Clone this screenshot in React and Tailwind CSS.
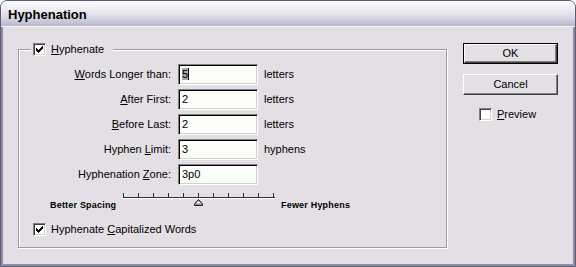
const fields = [
  { label: 'Words Longer than:', key: 'W', rest: 'ords Longer than:', value: '5', unit: 'letters', selected: true },
  { label: 'After First:', key: 'A', rest: 'fter First:', value: '2', unit: 'letters' },
  { label: 'Before Last:', key: 'B', rest: 'efore Last:', value: '2', unit: 'letters' },
  { label: 'Hyphen Limit:', pre: 'Hyphen ', key: 'L', rest: 'imit:', value: '3', unit: 'hyphens' },
  { label: 'Hyphenation Zone:', pre: 'Hyphenation ', key: 'Z', rest: 'one:', value: '3p0', unit: '' },
];

function Checkbox({ checked }) {
  return (
    <span className="flex h-[13px] w-[13px] shrink-0 items-center justify-center border border-t-[#808080] border-l-[#808080] border-r-white border-b-white bg-white shadow-[inset_1px_1px_0_#404040,inset_-1px_-1px_0_#d4d0c8]">
      {checked && (
        <svg width="7" height="7" viewBox="0 0 7 7" shapeRendering="crispEdges">
          <path d="M6 0h1v1h-1zM5 1h2v1h-2zM0 2h1v1h-1zM4 2h3v1h-3zM0 3h2v1h-2zM3 3h3v1h-3zM0 4h5v1h-5zM1 5h3v1h-3zM2 6h1v1h-1z" fill="#000" />
        </svg>
      )}
    </span>
  );
}

function Field({ value, selected }) {
  return (
    <div className="ml-[7px] flex h-[21px] w-[80px] items-center border border-t-[#808080] border-l-[#808080] border-r-white border-b-white bg-[#fbfdf8] pl-[3px] shadow-[inset_1px_1px_0_#000,inset_-1px_-1px_0_#d4d0c8]">
      {selected ? (
        <>
          <span className="bg-[#a9a6ad] leading-[12px]">{value}</span>
          <span className="h-[12px] w-px bg-black" />
        </>
      ) : (
        <span>{value}</span>
      )}
    </div>
  );
}

function Button({ children, isDefault }) {
  const face = (
    <div className="flex h-full w-full items-center justify-center border border-t-white border-l-white border-r-[#404040] border-b-[#404040] shadow-[inset_-1px_-1px_0_#808080]">
      {children}
    </div>
  );
  return isDefault ? (
    <div className="h-[21px] w-[95px] border border-black">{face}</div>
  ) : (
    <div className="h-[21px] w-[95px]">{face}</div>
  );
}

function Slider() {
  const ticks = [0, 15, 30, 45, 60, 75, 90, 105, 120, 135, 150];
  return (
    <svg width="152" height="14" viewBox="0 0 152 14" shapeRendering="crispEdges">
      <rect x="0" y="4" width="152" height="1" fill="#303030" />
      <rect x="0" y="5" width="152" height="1" fill="#ffffff" />
      {ticks.map((t) => (
        <rect key={t} x={t} y="0" width="1" height="5" fill="#303030" />
      ))}
      <g shapeRendering="auto">
        <polygon points="75.5,6.5 79.5,11 79.5,12.5 71.5,12.5 71.5,11" fill="#8f8d96" stroke="#202020" strokeWidth="1" />
        <polygon points="75.5,8 78,10.5 73,10.5" fill="#ffffff" />
      </g>
    </svg>
  );
}

export default function App() {
  return (
    <div className="flex h-[267px] w-[576px] flex-col overflow-hidden rounded-t-[7px] border border-[#5d5b74] bg-[#e4dfe5] font-['Liberation_Sans',Arial,sans-serif] text-[11px] text-black">
      {/* Title bar */}
      <div className="flex h-[26px] shrink-0 items-center border-b border-[#f7f6f9] bg-linear-to-b from-[#fdfdfe] via-[#e6e5ec] to-[#b9b7cb] pl-[7px] pt-[3px] text-[13px] font-bold">
        Hyphenation
      </div>

      {/* Body */}
      <div className="flex flex-1 border-x-2 border-b-2 border-[#8f8da3] pl-[15px] pt-[14px]">
        <fieldset className="h-[207px] w-[429px] border border-[#9e9aa6] shadow-[1px_1px_0_#fff,inset_1px_1px_0_#fff]">
          <legend className="ml-[12px] bg-[#e4dfe5] px-[2px]">
            <span className="flex items-center gap-[5px]">
              <Checkbox checked />
              <span>
                <span className="underline">H</span>yphenate
              </span>
              <span className="w-[2px]" />
            </span>
          </legend>

          <div className="mt-[6px] flex flex-col gap-[4px]">
            {fields.map((f) => (
              <div key={f.label} className="flex h-[21px] items-center">
                <span className="w-[152px] text-right">
                  {f.pre}
                  <span className="underline">{f.key}</span>
                  {f.rest}
                </span>
                <Field value={f.value} selected={f.selected} />
                {f.unit && <span className="ml-[6px]">{f.unit}</span>}
              </div>
            ))}
          </div>

          <div className="mt-[8px] flex items-start">
            <span className="ml-[31px] mt-[6px] w-[73px] text-[9px] font-bold tracking-[0.2px]">Better Spacing</span>
            <Slider />
            <span className="ml-[6px] mt-[6px] text-[9px] font-bold tracking-[0.2px]">Fewer Hyphens</span>
          </div>

          <div className="ml-[14px] mt-[9px] flex items-center gap-[5px]">
            <Checkbox checked />
            <span>
              Hyphenate <span className="underline">C</span>apitalized Words
            </span>
          </div>
        </fieldset>

        {/* Buttons */}
        <div className="ml-[16px] mt-[2px] flex flex-col">
          <Button isDefault>OK</Button>
          <div className="mt-[10px]">
            <Button>Cancel</Button>
          </div>
          <div className="ml-[16px] mt-[11px] flex items-center gap-[5px]">
            <Checkbox />
            <span>
              <span className="underline">P</span>review
            </span>
          </div>
        </div>
      </div>
    </div>
  );
}
